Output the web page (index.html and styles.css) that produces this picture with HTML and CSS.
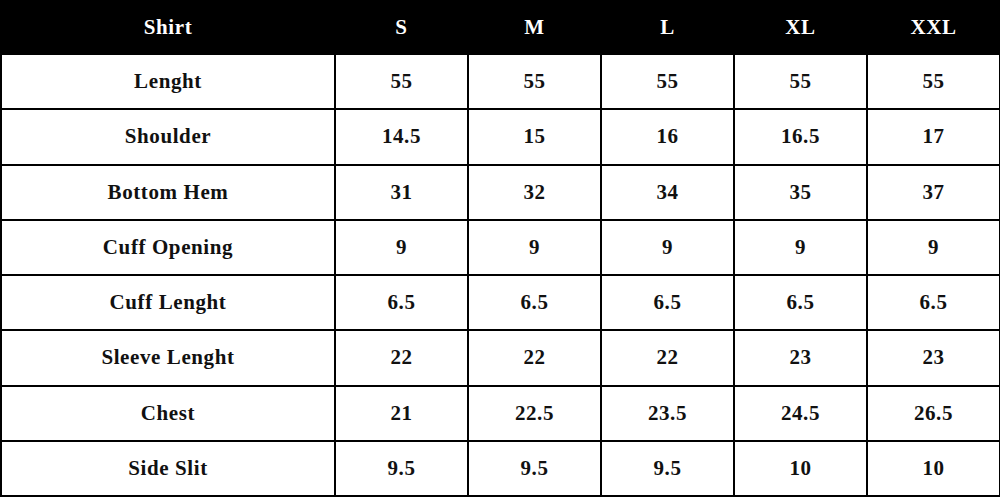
FILE: index.html
```html
<!DOCTYPE html>
<html>
<head>
<meta charset="utf-8">
<link rel="stylesheet" href="styles.css">
</head>
<body>
<table class="size-table">
  <colgroup>
    <col class="c-label">
    <col class="c-size">
    <col class="c-size">
    <col class="c-size">
    <col class="c-size">
    <col class="c-size">
  </colgroup>
  <thead>
    <tr><th>Shirt</th><th>S</th><th>M</th><th>L</th><th>XL</th><th>XXL</th></tr>
  </thead>
  <tbody>
    <tr><td>Lenght</td><td>55</td><td>55</td><td>55</td><td>55</td><td>55</td></tr>
    <tr><td>Shoulder</td><td>14.5</td><td>15</td><td>16</td><td>16.5</td><td>17</td></tr>
    <tr><td>Bottom Hem</td><td>31</td><td>32</td><td>34</td><td>35</td><td>37</td></tr>
    <tr><td>Cuff Opening</td><td>9</td><td>9</td><td>9</td><td>9</td><td>9</td></tr>
    <tr><td>Cuff Lenght</td><td>6.5</td><td>6.5</td><td>6.5</td><td>6.5</td><td>6.5</td></tr>
    <tr><td>Sleeve Lenght</td><td>22</td><td>22</td><td>22</td><td>23</td><td>23</td></tr>
    <tr><td>Chest</td><td>21</td><td>22.5</td><td>23.5</td><td>24.5</td><td>26.5</td></tr>
    <tr><td>Side Slit</td><td>9.5</td><td>9.5</td><td>9.5</td><td>10</td><td>10</td></tr>
  </tbody>
</table>
</body>
</html>
```
FILE: styles.css
```css
html, body {
  margin: 0;
  padding: 0;
  background: #fff;
}
.size-table {
  width: 1000px;
  height: 497px;
  border-collapse: collapse;
  table-layout: fixed;
  font-family: "Liberation Serif", "Times New Roman", serif;
  font-weight: bold;
  font-size: 21px;
  letter-spacing: 0.6px;
  color: #111;
}
.c-label { width: 334px; }
.c-size { width: 133px; }
.size-table th,
.size-table td {
  border: 2px solid #000;
  text-align: center;
  vertical-align: middle;
  padding: 0;
}
.size-table th {
  background: #000;
  color: #fff;
  height: 51px;
}
.size-table td {
  height: 53px;
}
```
